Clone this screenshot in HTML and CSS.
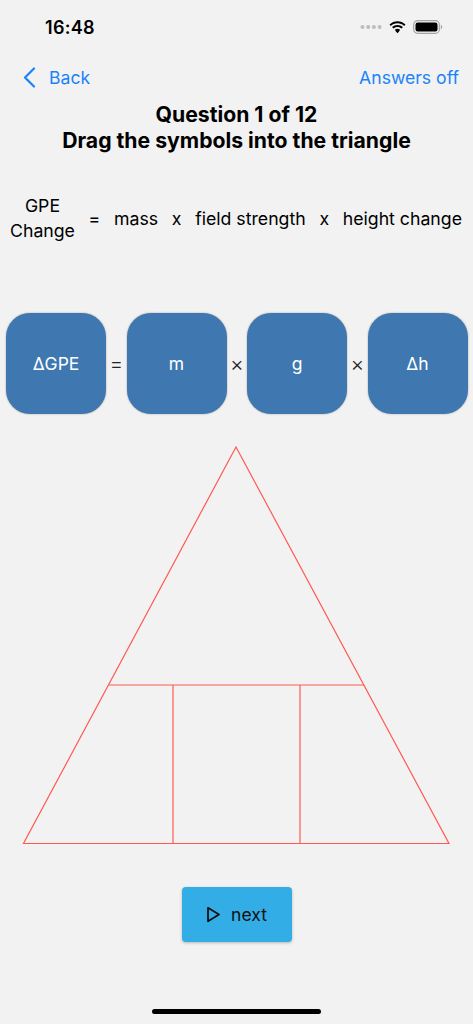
FILE: index.html
```html
<!DOCTYPE html>
<html lang="en">
<head>
  <meta charset="UTF-8">
  <meta name="viewport" content="width=device-width, initial-scale=1.0">
  <title>Question 1 of 12</title>
  <link rel="stylesheet" href="styles.css">
</head>
<body>
  <!-- status bar -->
  <div class="status">
    <span class="time">16:48</span>
    <div class="status-icons">
      <svg width="22" height="6" viewBox="0 0 22 6">
        <circle cx="2.5" cy="3" r="2" fill="#bdbdbd"/>
        <circle cx="8.2" cy="3" r="2" fill="#bdbdbd"/>
        <circle cx="13.9" cy="3" r="2" fill="#bdbdbd"/>
        <circle cx="19.6" cy="3" r="2" fill="#bdbdbd"/>
      </svg>
      <svg width="17" height="13" viewBox="0 0 17 13">
        <path d="M8.5 2.2c2.6 0 4.9 1 6.7 2.7l1.3-1.4C14.3 1.4 11.5 0.2 8.5 0.2S2.7 1.4 0.5 3.5l1.3 1.4C3.6 3.2 5.9 2.2 8.5 2.2z" fill="#000"/>
        <path d="M8.5 5.9c1.6 0 3 0.6 4.1 1.6l1.3-1.4C12.5 4.8 10.6 4 8.5 4S4.5 4.8 3.1 6.1l1.3 1.4c1.1-1 2.5-1.6 4.1-1.6z" fill="#000"/>
        <path d="M8.5 9.5c0.7 0 1.3 0.3 1.8 0.7l-1.8 2.1-1.8-2.1c0.5-0.4 1.1-0.7 1.8-0.7z" fill="#000"/>
        <path d="M5.8 8.9l1.3 1.4c0.4-0.3 0.9-0.5 1.4-0.5s1 0.2 1.4 0.5l1.3-1.4C10.5 8.2 9.5 7.8 8.5 7.8s-2 0.4-2.7 1.1z" fill="#000"/>
      </svg>
      <svg width="30" height="14" viewBox="0 0 30 14">
        <rect x="0.7" y="0.7" width="25.6" height="12.6" rx="3.8" fill="none" stroke="#a5a5a5" stroke-width="1.2"/>
        <rect x="2.5" y="2.5" width="22" height="9" rx="2.2" fill="#000"/>
        <path d="M27.8 4.8c0.9 0.3 1.4 1.1 1.4 2.2s-0.5 1.9-1.4 2.2z" fill="#a5a5a5"/>
      </svg>
    </div>
  </div>

  <!-- navigation -->
  <div class="nav">
    <a class="nav-back">
      <svg width="13" height="21" viewBox="0 0 13 21">
        <path d="M11 1.5L2 10.5l9 9" fill="none" stroke="#1a82fb" stroke-width="2.2" stroke-linecap="round" stroke-linejoin="round"/>
      </svg>
      <span>Back</span>
    </a>
    <a class="nav-link">Answers off</a>
  </div>

  <h1 class="title">Question 1 of 12<br>Drag the symbols into the triangle</h1>

  <!-- word equation -->
  <div class="words">
    <span class="word-stack">GPE<br>Change</span>
    <span>=</span>
    <span>mass</span>
    <span>x</span>
    <span>field strength</span>
    <span>x</span>
    <span>height change</span>
  </div>

  <!-- draggable symbols -->
  <div class="symbols">
    <div class="tile">ΔGPE</div>
    <span class="op">=</span>
    <div class="tile">m</div>
    <span class="op">×</span>
    <div class="tile">g</div>
    <span class="op">×</span>
    <div class="tile">Δh</div>
  </div>

  <!-- drop triangle -->
  <svg class="triangle" width="473" height="400" viewBox="0 0 473 400">
    <g fill="none" stroke="#ff5a52" stroke-width="1.2">
      <path d="M236 2L449 398.5H23.5Z"/>
      <path d="M109 240H364"/>
      <path d="M173 240V398.5"/>
      <path d="M300 240V398.5"/>
    </g>
  </svg>

  <div class="actions">
    <button class="next-btn">
      <svg width="15" height="17" viewBox="0 0 15 17">
        <path d="M2 1.8L13 8.5 2 15.2Z" fill="none" stroke="#111" stroke-width="1.8" stroke-linejoin="round"/>
      </svg>
      <span>next</span>
    </button>
  </div>

  <div class="home-bar"></div>
</body>
</html>
```

FILE: styles.css
```css
/* page */
body {
  margin: 0;
  background: #f2f2f2;
  color: #000;
  font-family: "Inter", "Roboto", sans-serif;
  width: 473px;
}

/* status bar */
.status {
  height: 54px;
  display: flex;
  align-items: center;
  justify-content: space-between;
  padding: 0 30px 0 45px;
  box-sizing: border-box;
}

.time {
  font-size: 18px;
  font-weight: 600;
  letter-spacing: 0.3px;
}

.status-icons {
  display: flex;
  align-items: center;
  gap: 7px;
}

/* nav bar */
.nav {
  height: 46px;
  display: flex;
  align-items: center;
  justify-content: space-between;
  padding: 0 14px 0 23px;
  color: #1a82fb;
  font-size: 17.6px;
}

.nav-back {
  display: flex;
  align-items: center;
  gap: 13px;
}

.title {
  margin: 1px 0 0;
  font-size: 21.2px;
  line-height: 26px;
  font-weight: 700;
  text-align: center;
}

/* word equation */
.words {
  margin-top: 40px;
  height: 50px;
  display: flex;
  align-items: center;
  gap: 13.7px;
  padding-left: 10px;
  font-size: 17.7px;
  white-space: nowrap;
}

.word-stack {
  text-align: center;
  line-height: 25px;
}

/* symbol tiles */
.symbols {
  margin-top: 70px;
  display: flex;
  align-items: center;
  padding-left: 6px;
}

.tile {
  width: 100px;
  height: 101px;
  border-radius: 24px;
  background: #3f77b0;
  color: #fff;
  font-size: 17.5px;
  display: flex;
  align-items: center;
  justify-content: center;
  box-shadow: 0 0 2px rgba(0, 0, 0, 0.35);
}

.op {
  width: 20.5px;
  text-align: center;
  font-size: 21px;
  font-weight: 300;
  color: #222;
}

.triangle {
  display: block;
  margin-top: 31px;
}

/* next button */
.actions {
  margin-top: 42px;
  display: flex;
  justify-content: center;
}

.next-btn {
  width: 110px;
  height: 55px;
  border: none;
  border-radius: 4px;
  background: #32ade6;
  box-shadow: 0 1px 3px rgba(0, 0, 0, 0.25);
  display: flex;
  align-items: center;
  justify-content: center;
  gap: 10px;
  font-family: inherit;
  font-size: 17.5px;
  color: #111;
  padding: 0;
}

.home-bar {
  width: 169px;
  height: 5px;
  border-radius: 3px;
  background: #000;
  margin: 67px auto 0;
}
```
